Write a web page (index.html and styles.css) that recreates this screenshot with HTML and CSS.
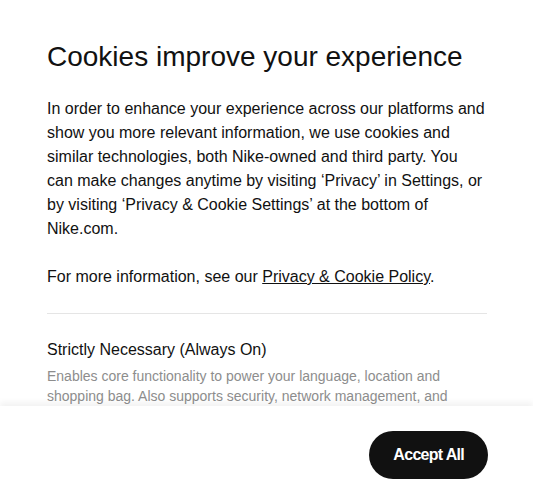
FILE: index.html
```html
<!DOCTYPE html>
<html lang="en">
<head>
  <meta charset="UTF-8">
  <meta name="viewport" content="width=device-width, initial-scale=1.0">
  <title>Cookie Settings</title>
  <link rel="stylesheet" href="styles.css">
</head>
<body>
  <div class="cookie-dialog">
    <div class="dialog-body">
      <h1>Cookies improve your experience</h1>
      <p>In order to enhance your experience across our platforms and show you more relevant information, we use cookies and similar technologies, both Nike-owned and third party. You can make changes anytime by visiting ‘Privacy’ in Settings, or by visiting ‘Privacy &amp; Cookie Settings’ at the bottom of Nike.com.</p>
      <p>For more information, see our <a href="#">Privacy &amp; Cookie Policy</a>.</p>

      <div class="category">
        <h2>Strictly Necessary (Always On)</h2>
        <p class="category-desc">Enables core functionality to power your language, location and shopping bag. Also supports security, network management, and accessibility.</p>
      </div>
    </div>

    <!-- Sticky footer with the accept button -->
    <div class="dialog-footer">
      <button class="accept-btn">Accept All</button>
    </div>
  </div>
</body>
</html>
```

FILE: styles.css
```css
/* Cookie dialog layout */
html, body {
  margin: 0;
  height: 100%;
}
body {
  font-family: "Liberation Sans", Arial, sans-serif;
  background-color: #fff;
  color: #111;
}
.cookie-dialog {
  display: flex;
  flex-direction: column;
  height: 100%;
}
.dialog-body {
  flex: 1;
  overflow: hidden;
  padding: 40px 46px 0 47px;
}
h1 {
  font-size: 28px;
  font-weight: 400;
  line-height: 34px;
  margin: 0 0 23px;
}
.dialog-body p {
  font-size: 16px;
  line-height: 24px;
  margin: 0 0 24px;
}
.dialog-body a {
  color: #111;
  text-decoration: underline;
}

/* Cookie category */
.category {
  border-top: 1px solid #e5e5e5;
  padding-top: 24px;
}
.category h2 {
  font-size: 16px;
  font-weight: 400;
  line-height: 24px;
  margin: 0 0 4px;
}
.dialog-body .category-desc {
  font-size: 14px;
  line-height: 20px;
  color: #8d8d8d;
}

/* Footer */
.dialog-footer {
  display: flex;
  justify-content: flex-end;
  padding: 25px 45px 20px;
  background-color: #fff;
  box-shadow: 0 -4px 6px rgba(0, 0, 0, 0.05);
  position: relative;
}
.accept-btn {
  font-family: "Liberation Sans", Arial, sans-serif;
  font-size: 16px;
  font-weight: 700;
  letter-spacing: -0.7px;
  color: #fff;
  background-color: #111;
  border: none;
  border-radius: 24px;
  height: 48px;
  padding: 0 24px;
  cursor: pointer;
}
```
